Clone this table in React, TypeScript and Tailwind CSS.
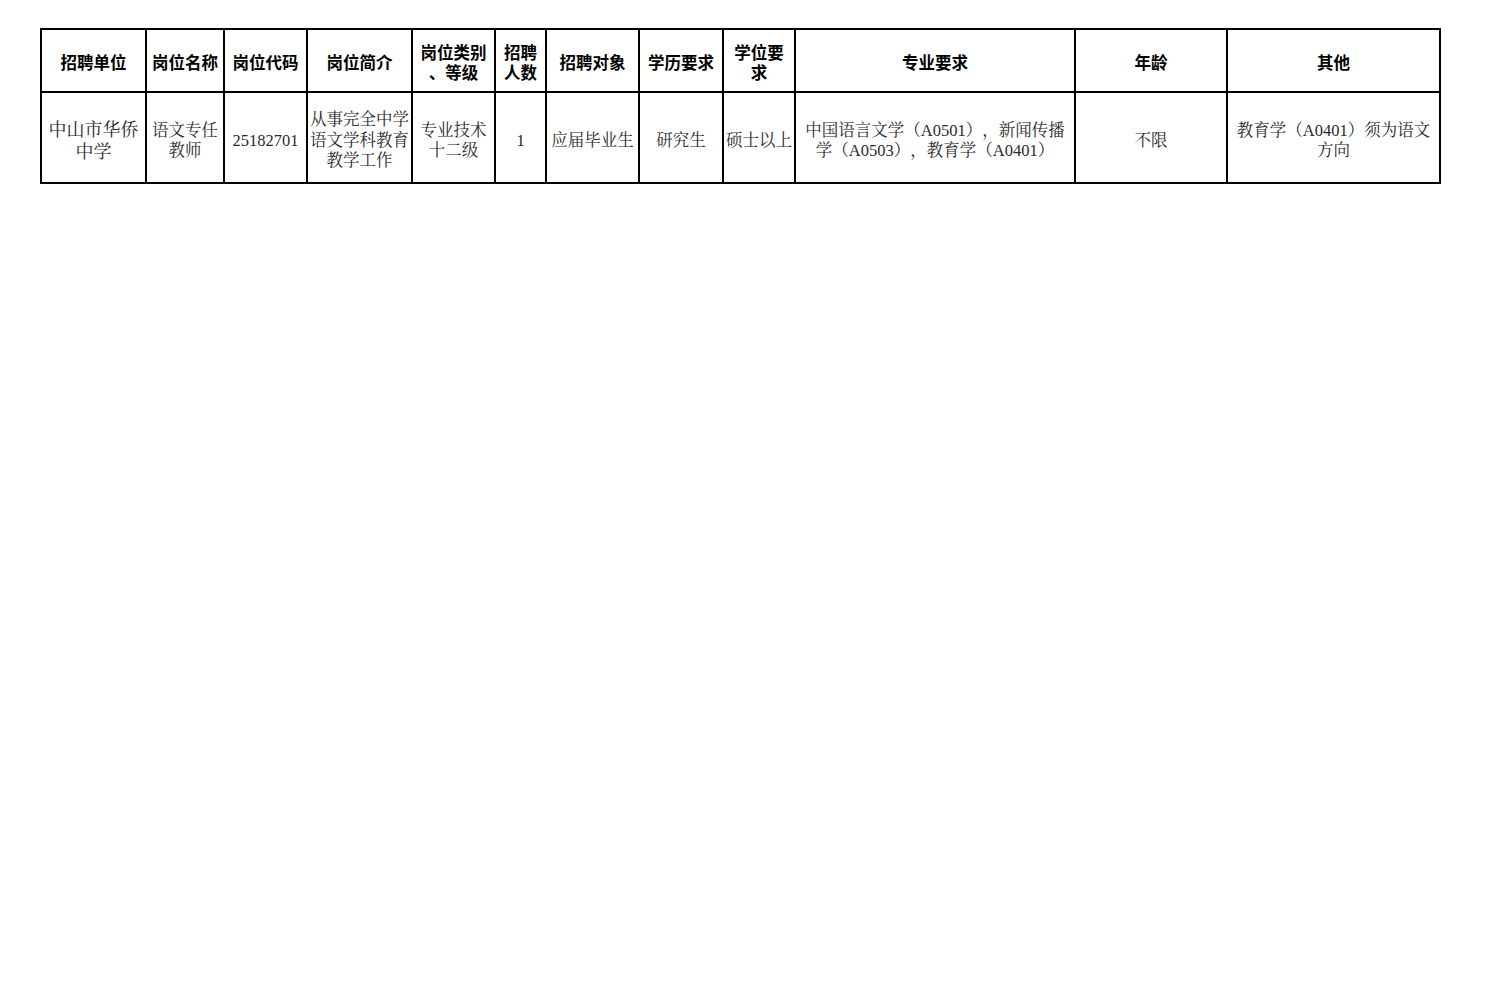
import React from 'react'

const serif = "font-['Liberation_Serif','Noto_Serif_CJK_SC','Noto_Sans_CJK_SC',serif]"
const sans = "font-['Noto_Sans_CJK_SC','Liberation_Sans',sans-serif]"

const columns = [105, 78, 83, 105, 83, 51, 93, 84, 72, 280, 152, 213]

const headers: string[][] = [
  ['招聘单位'],
  ['岗位名称'],
  ['岗位代码'],
  ['岗位简介'],
  ['岗位类别', '、等级'],
  ['招聘', '人数'],
  ['招聘对象'],
  ['学历要求'],
  ['学位要', '求'],
  ['专业要求'],
  ['年龄'],
  ['其他'],
]

const row: string[][] = [
  ['中山市华侨', '中学'],
  ['语文专任', '教师'],
  ['25182701'],
  ['从事完全中学', '语文学科教育', '教学工作'],
  ['专业技术', '十二级'],
  ['1'],
  ['应届毕业生'],
  ['研究生'],
  ['硕士以上'],
  ['中国语言文学（A0501），新闻传播', '学（A0503），教育学（A0401）'],
  ['不限'],
  ['教育学（A0401）须为语文', '方向'],
]

const Lines: React.FC<{ lines: string[] }> = ({ lines }) => (
  <>
    {lines.map((l, i) => (
      <div key={i} className="whitespace-nowrap [text-spacing-trim:space-all]">
        {l}
      </div>
    ))}
  </>
)

export default function App() {
  return (
    <div className="min-h-[981px] w-[1485px] bg-white pt-[28px] pl-[40px]">
      <table className="table-fixed border-collapse border-2 border-black" style={{ width: 1399 }}>
        <colgroup>
          {columns.map((w, i) => (
            <col key={i} style={{ width: w }} />
          ))}
        </colgroup>
        <thead>
          <tr className="h-[63px]">
            {headers.map((h, i) => (
              <th
                key={i}
                className={`border-2 border-black px-0 pt-[3px] pb-0 text-center align-middle text-[16.5px] leading-[20px] font-bold text-black ${sans}`}
              >
                <Lines lines={h} />
              </th>
            ))}
          </tr>
        </thead>
        <tbody>
          <tr className="h-[91px]">
            {row.map((c, i) => (
              <td
                key={i}
                className={`border-2 border-black px-0 pt-[7px] pb-0 text-center align-middle ${
                  i === 0 ? 'text-[18px] leading-[22px]' : 'text-[16.5px] leading-[20.5px]'
                } text-[#2a2a2a] ${serif}`}
              >
                <Lines lines={c} />
              </td>
            ))}
          </tr>
        </tbody>
      </table>
    </div>
  )
}
